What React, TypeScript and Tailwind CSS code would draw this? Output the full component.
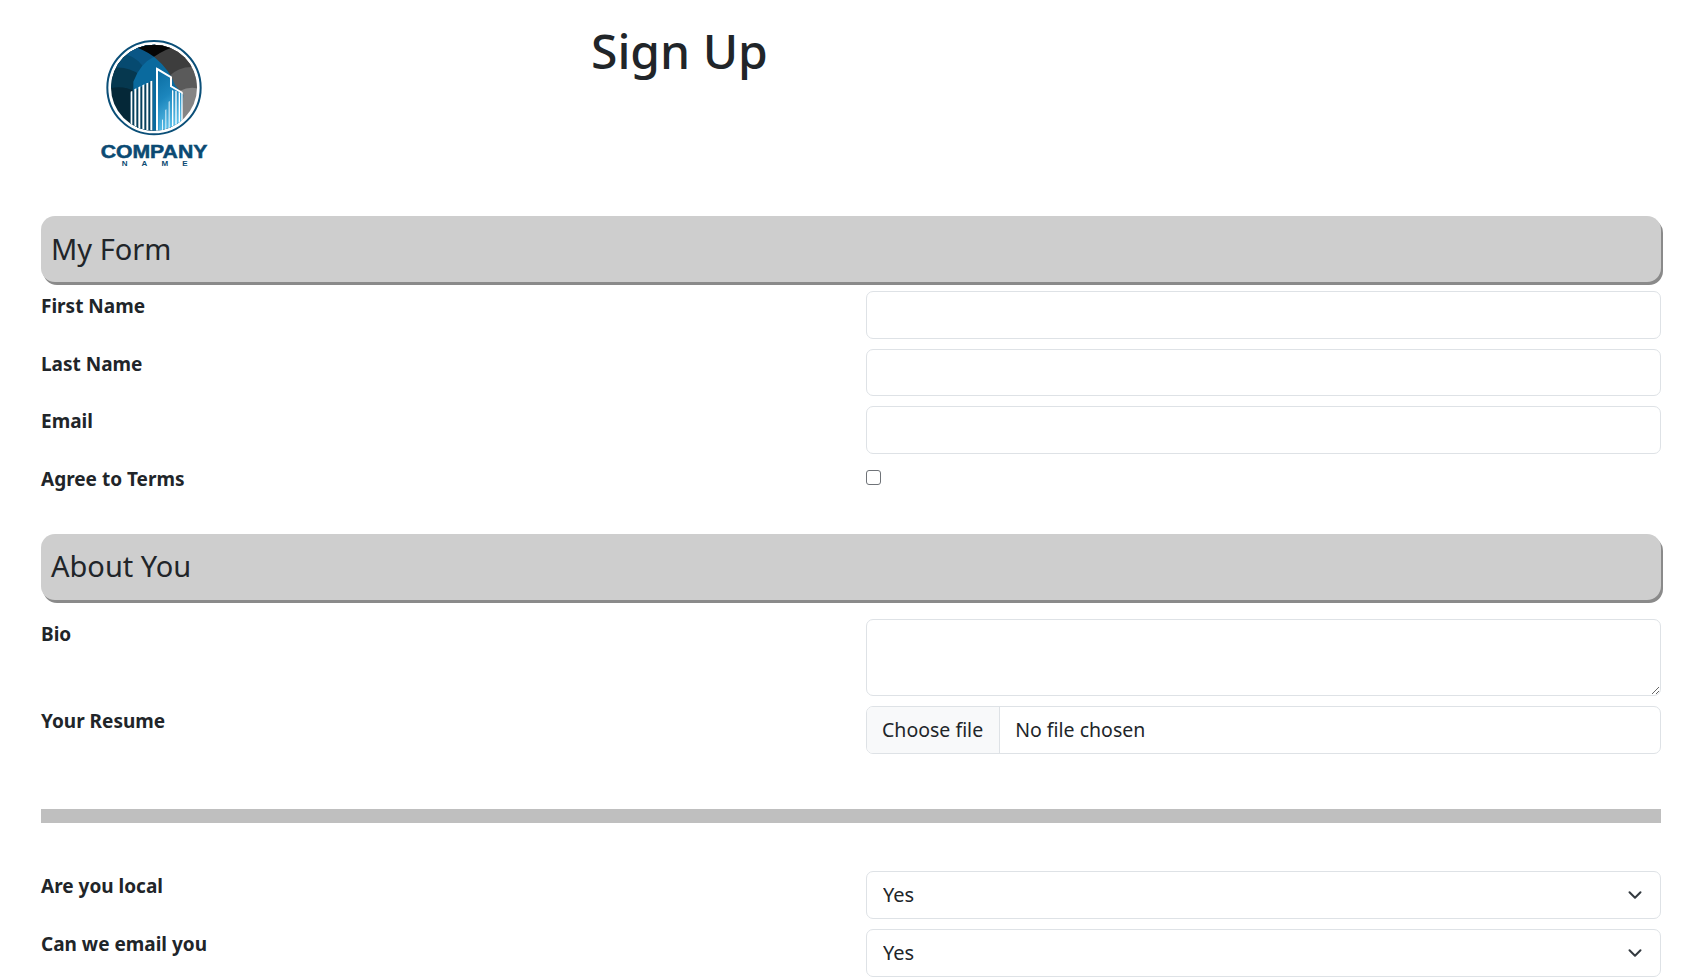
import React from "react";
import { ChevronDown } from "lucide-react";

const inputClass =
  "block w-full h-[47.5px] rounded-[7px] border border-[#dee2e6] bg-white px-4 text-[20px] text-[#212529] outline-none";

const Logo = () => (
  <svg viewBox="0 0 480 480" className="w-[160px] h-[160px] block" aria-label="logo">
    <defs>
      <clipPath id="disc">
        <circle cx="222" cy="203" r="129" />
      </clipPath>
      <linearGradient id="face" x1="0" y1="0" x2="0.3" y2="1">
        <stop offset="0" stopColor="#0a6a9e" />
        <stop offset="0.5" stopColor="#1c86bd" />
        <stop offset="1" stopColor="#5cc0ea" />
      </linearGradient>
    </defs>
    <circle cx="222" cy="203" r="140" fill="none" stroke="#0b4f78" strokeWidth="6" />
    <g clipPath="url(#disc)">
      <rect x="80" y="60" width="150" height="300" fill="#052838" />
      <path d="M90 205 Q130 195 165 215 L225 215 V60 H90Z" fill="#06384f" />
      <path d="M90 145 Q140 135 180 165 L225 165 V60 H90Z" fill="#064a70" />
      <path d="M120 100 Q165 105 190 140 L225 110 V60 H120Z" fill="#0a5686" />
      <rect x="222" y="60" width="130" height="300" fill="#858585" />
      <path d="M222 60 H352 V205 Q325 200 300 212 L222 190Z" fill="#5a5a5a" />
      <path d="M222 60 H352 V142 Q300 135 265 170 L222 150Z" fill="#3d3d3d" />
      <path d="M150 75 H300 Q260 85 222 110 Q195 90 150 75Z" fill="#050505" />
      <path d="M160 185 Q180 130 222 110 Q270 150 285 195 L310 225 L300 340 H160Z" fill="#0a6a9e" />
      <path d="M150 220 L218 182 V336 H150Z" fill="#063f5c" />
      <path d="M232 145 L274 170 V197 L306 217 V310 L235 335Z" fill="url(#face)" />
      <g fill="#ffffff">
        <path d="M152 215 l5 -3 V322 l-5 -3Z" />
        <path d="M163 208 l6 -3 V326 l-6 -2Z" />
        <path d="M175 202 l6 -3 V328 l-6 -2Z" />
        <path d="M187 196 l6 -3 V330 l-6 -1Z" />
        <path d="M199 190 l6 -2 V331 l-6 -1Z" />
        <path d="M211 184 l6 -2 V332 l-6 -1Z" />
        <path d="M228 142 l6 3 V334 l-6 -1Z" />
        <path d="M234 145 L276 170 V197 L308 216 V222 L270 200 V173 L234 152Z" />
        <path d="M246 300 l3 -2 V331 l-3 1Z" opacity="0.85" />
        <path d="M256 270 l3 -2 V327 l-3 1Z" opacity="0.85" />
        <path d="M266 245 l3 -2 V324 l-3 1Z" opacity="0.9" />
        <path d="M276 210 l4 2 V320 l-4 1Z" />
        <path d="M286 212 l4 2 V316 l-4 1Z" />
        <path d="M296 216 l4 2 V313 l-4 1Z" />
        <path d="M304 218 l4 2 V310 l-4 1Z" />
      </g>
    </g>
    <text x="222" y="415" textAnchor="middle" fontFamily="Liberation Sans, sans-serif" fontWeight="700" fontSize="53" fill="#0b4a73" stroke="#0b4a73" strokeWidth="1.5" textLength="320" lengthAdjust="spacingAndGlyphs">
      COMPANY
    </text>
    <text x="224" y="439" textAnchor="middle" fontFamily="Liberation Sans, sans-serif" fontWeight="700" fontSize="24" fill="#0b4a73" textLength="198">
      NAME
    </text>
  </svg>
);

const Banner = ({ title }: { title: string }) => (
  <div className="h-[66px] flex items-center rounded-[14px] bg-[#cecece] pl-[10px] pb-[1px] shadow-[2px_3px_0_0_#8a8a8a] text-[29px] text-[#212529]">
    {title}
  </div>
);

const Row = ({ label, children }: { label: string; children: React.ReactNode }) => (
  <div className="flex">
    <label className="w-[825px] shrink-0 text-[19px] leading-[30px] font-bold text-[#212529]">{label}</label>
    <div className="flex-1">{children}</div>
  </div>
);

const SelectField = () => (
  <div className="relative">
    <select className={`${inputClass} appearance-none`} defaultValue="Yes">
      <option>Yes</option>
      <option>No</option>
    </select>
    <ChevronDown className="absolute right-[15px] top-[13px] w-[22px] h-[22px] text-[#343a40] pointer-events-none" strokeWidth={2.2} />
  </div>
);

export default function App() {
  return (
    <div className="pl-[41px] pr-[34px] font-['Noto_Sans',sans-serif] text-[#212529] bg-white">
      <div className="h-[216px] relative">
        <div className="absolute left-[39px] top-[20px]">
          <Logo />
        </div>
        <h1 className="pl-[550px] pt-[21px] text-[48px] leading-[60px] font-medium">Sign Up</h1>
      </div>
      <Banner title="My Form" />
      <div className="mt-[9px] flex flex-col gap-[10px]">
        <Row label="First Name"><input type="text" className={inputClass} /></Row>
        <Row label="Last Name"><input type="text" className={inputClass} /></Row>
        <Row label="Email"><input type="text" className={inputClass} /></Row>
        <Row label="Agree to Terms">
          <input type="checkbox" className="block w-[15px] h-[15px] mt-[6px] mb-[22px] appearance-none rounded-[3px] border border-[#6f7378] bg-white" />
        </Row>
      </div>
      <div className="mt-[27px]">
        <Banner title="About You" />
      </div>
      <div className="mt-[19px] flex flex-col gap-[10px]">
        <Row label="Bio">
          <textarea className="block w-full h-[77px] rounded-[7px] border border-[#dee2e6] bg-white px-4 py-2 text-[20px] outline-none" />
        </Row>
        <Row label="Your Resume">
          <div className="flex items-stretch h-[48px] rounded-[7px] border border-[#dee2e6] bg-white overflow-hidden text-[19.5px]">
            <button type="button" className="pl-[15px] pr-4 bg-[#f8f9fa] border-r border-[#dee2e6]">Choose file</button>
            <span className="flex items-center pl-[15px]">No file chosen</span>
          </div>
        </Row>
      </div>
      <div className="mt-[55px] h-[14.5px] bg-[#bfbfbf]" />
      <div className="mt-[48px] flex flex-col gap-[10.5px]">
        <Row label="Are you local"><SelectField /></Row>
        <Row label="Can we email you"><SelectField /></Row>
      </div>
    </div>
  );
}
